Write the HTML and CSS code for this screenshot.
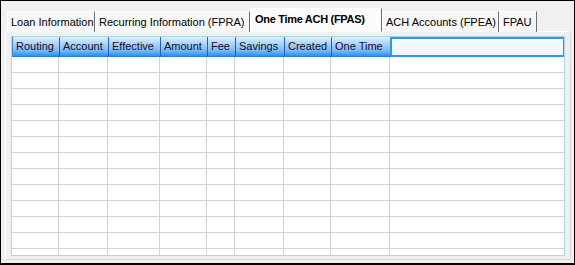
FILE: index.html
```html
<!DOCTYPE html>
<html>
<head>
    <title>One Time ACH</title>
    <link rel="stylesheet" href="styles.css">
</head>
<body>
    <div class="window">
        <div class="tabs">
            <div class="tab t-loan">Loan Information</div>
            <div class="tab t-recur">Recurring Information (FPRA)</div>
            <div class="tab selected t-once">One Time ACH (FPAS)</div>
            <div class="tab t-ach">ACH Accounts (FPEA)</div>
            <div class="tab t-fpau">FPAU</div>
        </div>
        <div class="panel">
            <div class="grid">
                <div class="grid-head">
                    <div class="hcell c1">Routing</div>
                    <div class="hcell c2">Account</div>
                    <div class="hcell c3">Effective</div>
                    <div class="hcell c4">Amount</div>
                    <div class="hcell c5">Fee</div>
                    <div class="hcell c6">Savings</div>
                    <div class="hcell c7">Created</div>
                    <div class="hcell c8">One Time</div>
                    <div class="hfill"></div>
                </div>
                <div class="grid-body" id="rows"></div>
            </div>
        </div>
    </div>

    <script>
        // empty rows of the grid
        const rowsEl = document.getElementById('rows');
        for (let i = 0; i < 13; i++) {
            const row = document.createElement('div');
            row.className = 'row';
            for (let c = 1; c <= 9; c++) {
                const cell = document.createElement('div');
                cell.className = 'cell c' + c;
                row.appendChild(cell);
            }
            rowsEl.appendChild(row);
        }
    </script>
</body>
</html>
```
FILE: styles.css
```css
body {
    margin: 0;
    font-family: "Liberation Sans", Arial, sans-serif;
    font-size: 11px;
    color: #000000;
    background-color: #f0f0f0;
}

.window {
    width: 575px;
    height: 265px;
    box-sizing: border-box;
    border: 1px solid #000000;
    border-bottom-width: 2px;
    background-color: #f0f0f0;
    display: flex;
    flex-direction: column;
    overflow: hidden;
}

.tabs {
    flex-shrink: 0;
    display: flex;
    align-items: flex-end;
    height: 30px;
    padding-left: 6px;
    position: relative;
    z-index: 1;
}

.tab {
    box-sizing: border-box;
    height: 21px;
    line-height: 18px;
    padding: 1px 0 0 3px;
    white-space: nowrap;
    background-color: #f7f7f7;
    border-top: 1px solid #ffffff;
    border-left: 1px solid #ffffff;
    border-right: 1px solid #6d6d6d;
    margin-bottom: -1px;
}

.tab.selected {
    height: 24px;
    font-weight: bold;
    letter-spacing: -0.3px;
    background-color: #fbfbfb;
    padding-top: 0;
    padding-left: 4px;
    line-height: 20px;
    margin-bottom: -1px;
    border-bottom: 1px solid #fbfbfb;
}

.t-loan { width: 88px; }
.t-recur { width: 155px; }
.t-once { width: 132px; }
.t-ach { width: 117px; }
.t-fpau { width: 38px; }

.panel {
    flex: 1;
    min-height: 0;
    margin: 0 3px 3px 4px;
    padding: 4px 5px 3px 5px;
    border-top: 1px solid #ffffff;
    border-left: 1px solid #ffffff;
    border-right: 1px solid #d8d8d8;
    border-bottom: 1px solid #d8d8d8;
    display: flex;
}

.grid {
    flex: 1;
    min-height: 0;
    border: 1px solid #a8d8e6;
    background-color: #ffffff;
    overflow: hidden;
}

.grid-head {
    display: flex;
    height: 20px;
}

.hcell {
    box-sizing: border-box;
    height: 20px;
    line-height: 19px;
    padding-left: 3px;
    color: #140f2a;
    background: linear-gradient(to bottom, #e0effd 0%, #acd5fa 35%, #7cbaf5 70%, #2e8eeb 100%);
    border-left: 1px solid #1f62b8;
    border-bottom: 1px solid #1e7fe6;
    overflow: hidden;
}

.hcell.c1 {
    border-left-color: #3f8de0;
}

.hfill {
    flex: 1;
    box-sizing: border-box;
    height: 20px;
    border: 2px solid #2f95f3;
    border-right-width: 1px;
    background: linear-gradient(to bottom, #f8fbfe, #edf5fd);
}

.row {
    display: flex;
    height: 16px;
}

.cell {
    box-sizing: border-box;
    height: 16px;
    border-bottom: 1px solid #d3d3d3;
    border-right: 1px solid #d3d3d3;
}

.cell.c9 {
    flex: 1;
    border-right: none;
}

.c1 { width: 47px; }
.c2 { width: 49px; }
.c3 { width: 52px; }
.c4 { width: 47px; }
.c5 { width: 28px; }
.c6 { width: 49px; }
.c7 { width: 47px; }
.c8 { width: 59px; }
```
